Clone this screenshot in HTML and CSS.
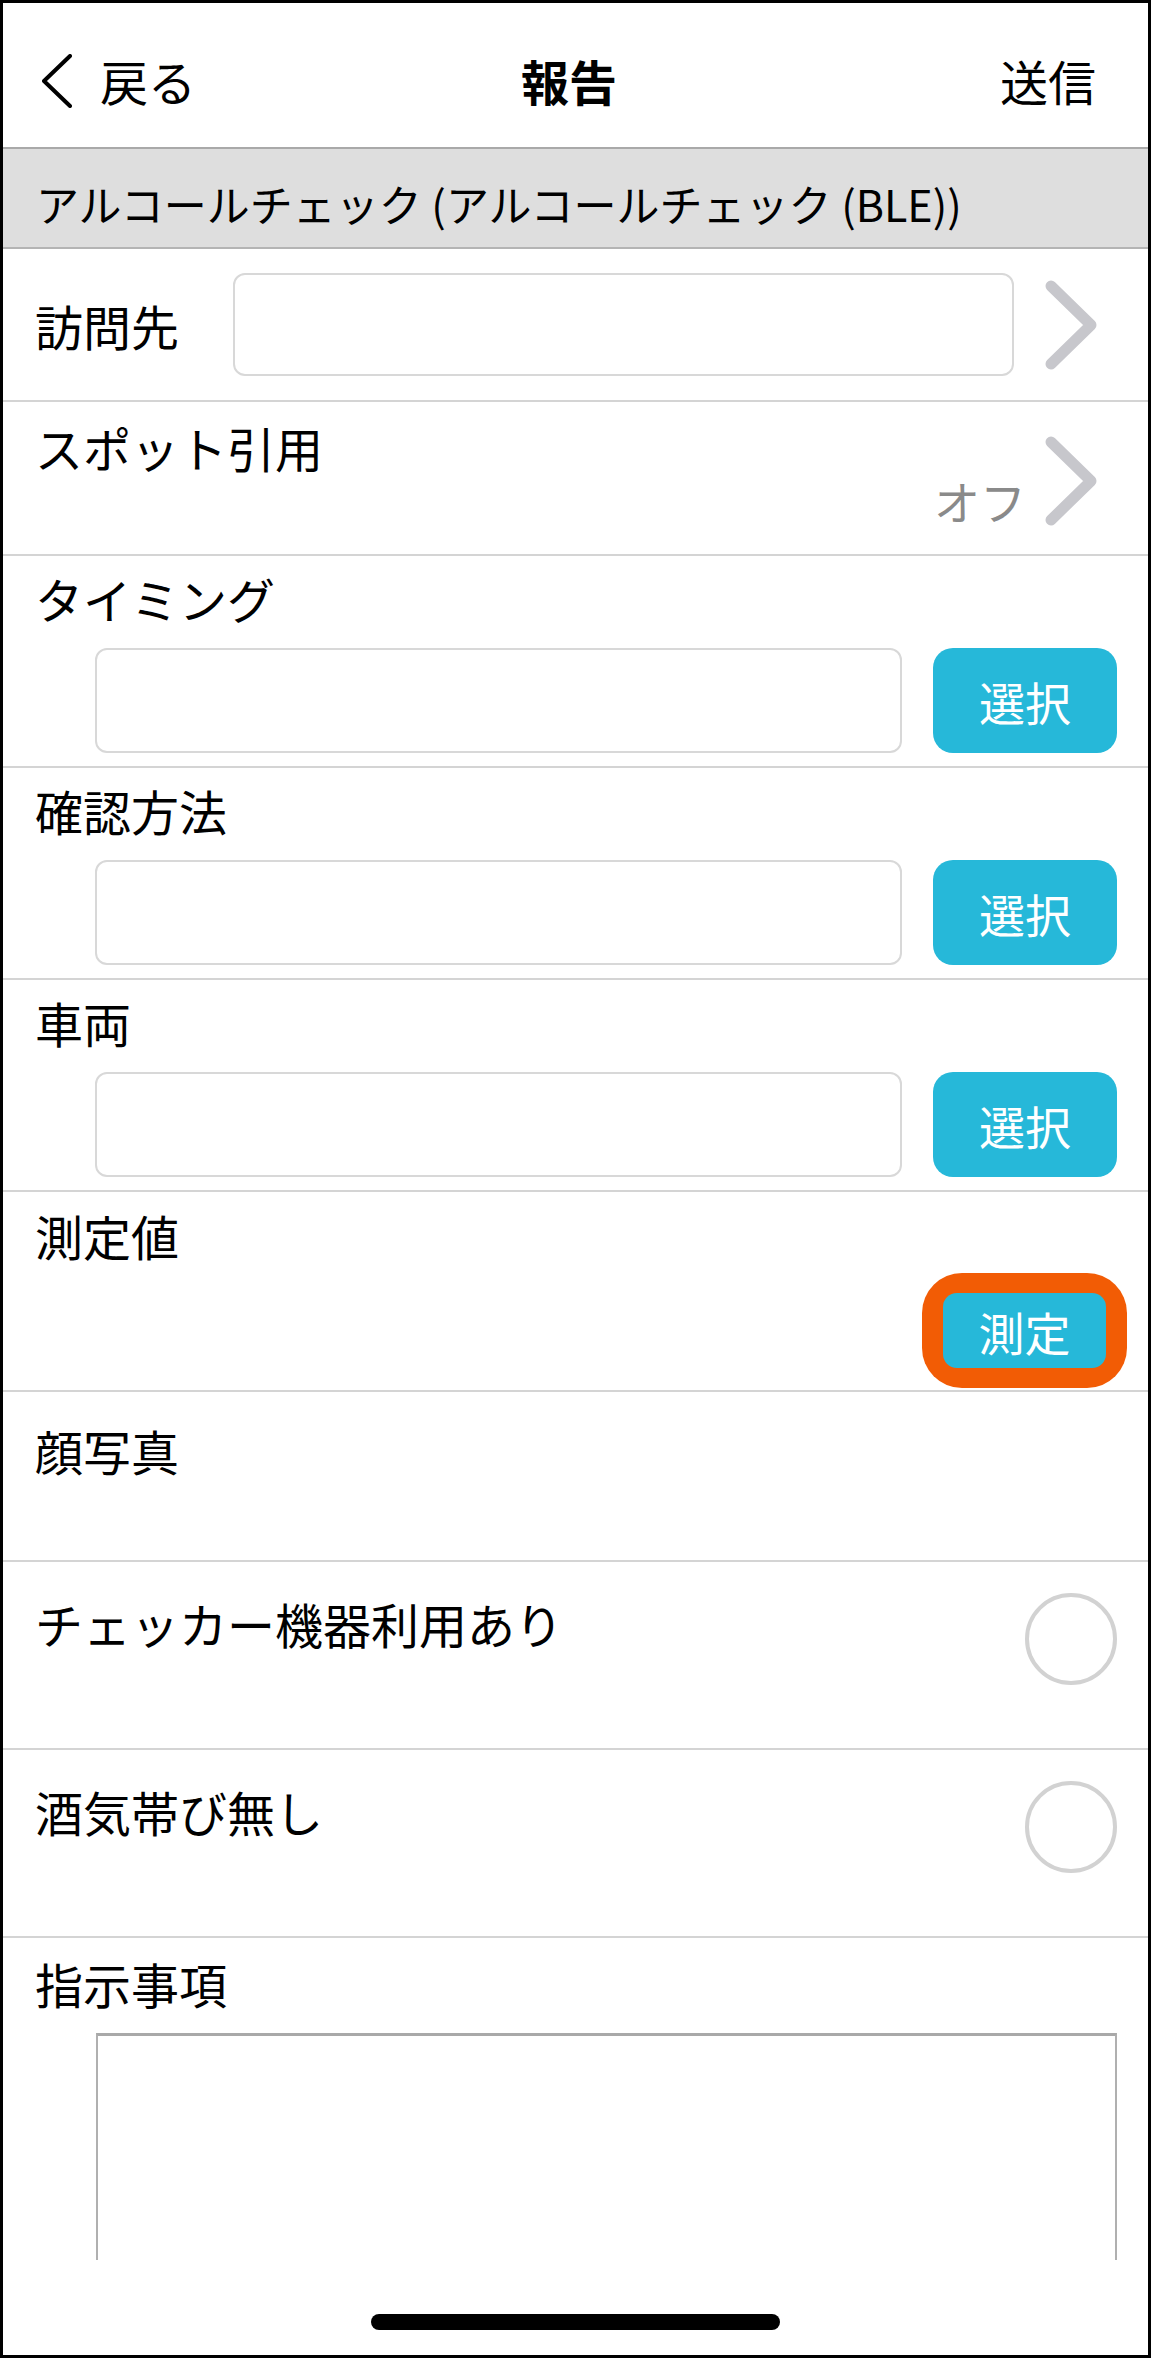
FILE: index.html
```html
<!DOCTYPE html>
<html lang="ja">
<head>
    <meta charset="UTF-8">
    <meta name="viewport" content="width=device-width, initial-scale=1.0">
    <title>報告</title>
    <link rel="stylesheet" href="styles.css">
</head>
<body>
    <div class="screen">
        <!-- Navigation bar -->
        <header class="nav">
            <div class="nav-left">
                <svg class="back-icon" width="30" height="54" viewBox="0 0 30 54">
                    <path d="M28 2 L2 27 L28 52" />
                </svg>
                <span>戻る</span>
            </div>
            <div class="nav-title">報告</div>
            <div class="nav-right">送信</div>
        </header>

        <main class="content">
            <div class="section-title">アルコールチェック (アルコールチェック (BLE))</div>

            <div class="row row-link">
                <span class="label label-fixed">訪問先</span>
                <div class="input input-link"></div>
                <svg class="disclosure" width="52" height="90" viewBox="0 0 52 90">
                    <path d="M6 6 L46 45 L6 84" />
                </svg>
            </div>

            <div class="row row-spot">
                <span class="label label-top">スポット引用</span>
                <div class="spot-value">
                    <span class="value-text">オフ</span>
                    <svg class="disclosure disclosure-plain" width="52" height="90" viewBox="0 0 52 90">
                        <path d="M6 6 L46 45 L6 84" />
                    </svg>
                </div>
            </div>

            <div class="row row-select">
                <div class="label">タイミング</div>
                <div class="field-line">
                    <div class="input input-select"></div>
                    <button class="select-btn" type="button">選択</button>
                </div>
            </div>

            <div class="row row-select">
                <div class="label">確認方法</div>
                <div class="field-line">
                    <div class="input input-select"></div>
                    <button class="select-btn" type="button">選択</button>
                </div>
            </div>

            <div class="row row-select">
                <div class="label">車両</div>
                <div class="field-line">
                    <div class="input input-select"></div>
                    <button class="select-btn" type="button">選択</button>
                </div>
            </div>

            <div class="row row-measure">
                <div class="label">測定値</div>
                <div class="measure-line">
                    <div class="measure-frame">
                        <button class="measure-btn" type="button">測定</button>
                    </div>
                </div>
            </div>

            <div class="row row-face">
                <div class="label">顔写真</div>
            </div>

            <div class="row row-toggle">
                <span class="label label-toggle">チェッカー機器利用あり</span>
                <span class="toggle"></span>
            </div>

            <div class="row row-toggle">
                <span class="label label-toggle">酒気帯び無し</span>
                <span class="toggle"></span>
            </div>

            <div class="row row-notes">
                <div class="label">指示事項</div>
                <div class="notes-box"></div>
            </div>
        </main>

        <!-- Home indicator area -->
        <footer class="home-area">
            <div class="home-indicator"></div>
        </footer>
    </div>
</body>
</html>
```

FILE: styles.css
```css
/* Reset and general styling */
* {
    margin: 0;
    padding: 0;
    box-sizing: border-box;
    font-family: "Noto Sans CJK JP", "Noto Sans", sans-serif;
}

body {
    background-color: #fff;
    color: #000;
}

.screen {
    width: 1151px;
    height: 2358px;
    border: 3px solid #000;
    display: flex;
    flex-direction: column;
    overflow: hidden;
    background: #fff;
}

/* Navigation bar */
.nav {
    flex-shrink: 0;
    height: 146px;
    padding: 9px 52px 0 39px;
    border-bottom: 2px solid #a9a9a9;
    display: grid;
    grid-template-columns: 1fr auto 1fr;
    align-items: center;
    font-size: 48px;
    line-height: 1;
}

.nav-left {
    display: flex;
    align-items: center;
    gap: 28px;
}

.back-icon {
    margin-top: 3px;
}

.back-icon path {
    fill: none;
    stroke: #000;
    stroke-width: 4;
    stroke-linecap: round;
    stroke-linejoin: round;
}

.nav-title {
    font-weight: bold;
}

.nav-right {
    justify-self: end;
}

/* Form content */
.content {
    flex: 1;
    overflow: hidden;
}

.section-title {
    height: 100px;
    padding: 33px 33px 0;
    background: #dedede;
    border-bottom: 2px solid #b4b4b4;
    font-size: 43px;
    line-height: 1;
    white-space: nowrap;
}

.row {
    padding: 0 31px 0 32px;
    border-bottom: 2px solid #d4d4d4;
}

.label {
    font-size: 48px;
    line-height: 48px;
    white-space: nowrap;
}

.input {
    background: #fff;
    border: 2px solid #d8d8d8;
    border-radius: 12px;
}

.disclosure path {
    fill: none;
    stroke: #c7c7cc;
    stroke-width: 11;
    stroke-linecap: round;
    stroke-linejoin: round;
}

/* Row with inline input and arrow */
.row-link {
    height: 153px;
    display: flex;
    align-items: center;
}

.label-fixed {
    width: 144px;
    margin-right: 54px;
}

.input-link {
    flex: 1;
    height: 103px;
    margin-right: 31px;
}

.row-link .disclosure {
    flex-shrink: 0;
    margin-right: 20px;
}

/* Spot row */
.row-spot {
    height: 154px;
    display: flex;
    justify-content: space-between;
    align-items: flex-start;
}

.label-top {
    margin-top: 21px;
}

.spot-value {
    display: flex;
    align-items: flex-end;
    gap: 19px;
    margin-top: 34px;
    margin-right: 20px;
}

.value-text {
    color: #8a8a8a;
    font-size: 46px;
    line-height: 1;
    margin-bottom: 3px;
}

/* Rows with select button */
.row-select {
    height: 212px;
    padding-top: 18px;
}

.field-line {
    display: flex;
    gap: 31px;
    margin: 26px 0 0 60px;
}

.input-select {
    flex: 1;
    height: 105px;
}

.select-btn,
.measure-btn {
    border: none;
    background-color: #26b8d9;
    color: #fff;
    font-size: 46px;
    line-height: 1;
    cursor: pointer;
}

.select-btn {
    width: 184px;
    height: 105px;
    border-radius: 20px;
}

/* Measure row */
.row-measure {
    height: 200px;
    padding-top: 19px;
}

.measure-line {
    display: flex;
    justify-content: flex-end;
    margin: 14px -10px 0 0;
}

.measure-frame {
    padding: 20px 21px;
    background: #f25c05;
    border-radius: 40px;
}

.measure-btn {
    display: block;
    width: 163px;
    height: 75px;
    border-radius: 14px;
}

/* Face photo */
.row-face {
    height: 170px;
    padding-top: 34px;
}

/* Toggle rows */
.row-toggle {
    height: 188px;
    padding-top: 31px;
    display: flex;
    justify-content: space-between;
    align-items: flex-start;
}

.label-toggle {
    margin-top: 6px;
}

.toggle {
    width: 92px;
    height: 92px;
    border: 4px solid #d2d2d2;
    border-radius: 50%;
}

/* Notes */
.row-notes {
    padding-top: 21px;
    border-bottom: none;
}

.notes-box {
    height: 300px;
    margin: 26px 0 0 61px;
    border: 2px solid #b0b0b0;
    border-top: 3px solid #a9a9a9;
}

/* Home indicator */
.home-area {
    flex-shrink: 0;
    height: 95px;
    padding-top: 54px;
    display: flex;
    justify-content: center;
    background: #fff;
}

.home-indicator {
    width: 409px;
    height: 16px;
    border-radius: 8px;
    background: #000;
}
```
